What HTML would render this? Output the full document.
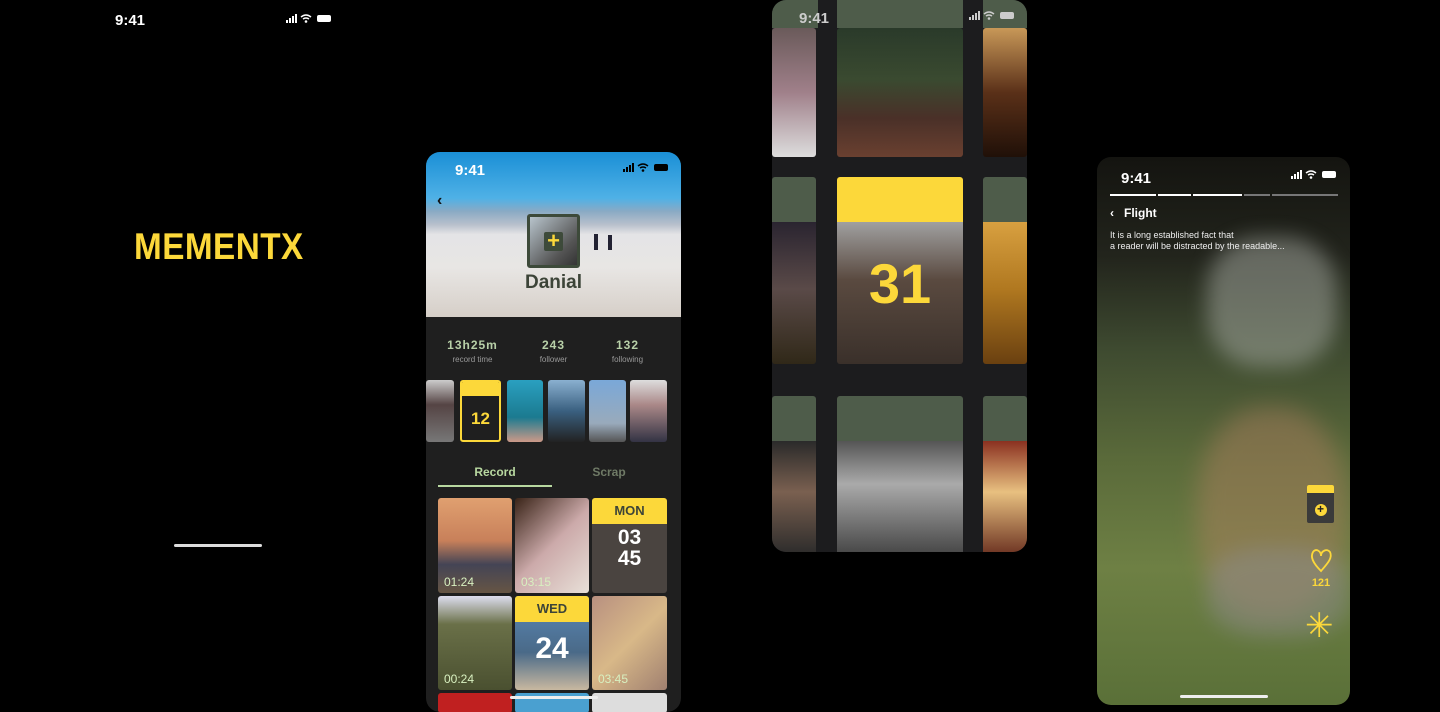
<!DOCTYPE html>
<html><head><style>
*{margin:0;padding:0;box-sizing:border-box}
body{width:1440px;height:705px;background:#000;position:relative;overflow:hidden;font-family:"Liberation Sans",sans-serif}
.abs{position:absolute}
.sb{font-weight:bold;font-size:15px;color:#fff}
.img{position:absolute;border-radius:3px;overflow:hidden}
</style></head><body>
<!-- screen 1 -->
<div class="abs sb" style="left:115px;top:12px">9:41</div>
<svg class="abs" style="left:286px;top:14px" width="48" height="10"><rect x="0" y="6" width="2" height="3" fill="#fff"/><rect x="3" y="4" width="2" height="5" fill="#fff"/><rect x="6" y="2" width="2" height="7" fill="#fff"/><rect x="9" y="0" width="2" height="9" fill="#fff"/><path d="M15 3 Q20 -1 25 3 M17 5 Q20 3 23 5" stroke="#fff" stroke-width="1.5" fill="none"/><circle cx="20" cy="7.5" r="1.3" fill="#fff"/><rect x="31" y="1" width="14" height="7" rx="2" fill="#fff"/></svg>
<div class="abs" style="left:134px;top:226px;font-size:37px;font-weight:bold;color:#fcd83a;transform:scaleX(0.9);transform-origin:0 0;white-space:nowrap;letter-spacing:0.5px">MEMENTX</div>
<div class="abs" style="left:174px;top:544px;width:88px;height:3px;background:#ddd;border-radius:2px"></div>

<!-- screen 2 -->
<div class="abs" style="left:426px;top:152px;width:255px;height:560px;border-radius:14px;overflow:hidden;background:#1f1f1f">
 <div class="abs" style="left:0;top:0;width:255px;height:165px;background:linear-gradient(180deg,#1a8fd6 0%,#4fb1e6 28%,#8aaac4 36%,#b8c0cc 44%,#e4e4e6 50%,#e8e6e4 70%,#d6cfc8 100%)"></div>
 <div class="abs" style="left:168px;top:82px;width:4px;height:16px;background:#223"></div>
 <div class="abs" style="left:182px;top:83px;width:4px;height:15px;background:#223"></div>
 <div class="abs sb" style="left:29px;top:10px">9:41</div>
 <svg class="abs" style="left:197px;top:11px" width="48" height="10"><rect x="0" y="6" width="2" height="3" fill="#000"/><rect x="3" y="4" width="2" height="5" fill="#000"/><rect x="6" y="2" width="2" height="7" fill="#000"/><rect x="9" y="0" width="2" height="9" fill="#000"/><path d="M15 3 Q20 -1 25 3 M17 5 Q20 3 23 5" stroke="#000" stroke-width="1.5" fill="none"/><circle cx="20" cy="7.5" r="1.3" fill="#000"/><rect x="31" y="1" width="14" height="7" rx="2" fill="#000"/></svg>
 <div class="abs" style="left:11px;top:40px;font-size:16px;color:#111;font-weight:bold">‹</div>
 <div class="abs" style="left:101px;top:62px;width:53px;height:54px;border:3px solid #3d4a3a;border-radius:3px;background:linear-gradient(135deg,#b8c4cc,#555 70%,#333)"></div>
 <div class="abs" style="left:118px;top:80px;width:19px;height:19px;background:#3d4a3a;border-radius:2px;color:#fcd83a;font-size:22px;line-height:18px;text-align:center;font-weight:bold">+</div>
 <div class="abs" style="left:0;top:120px;width:255px;text-align:center;font-size:19px;font-weight:bold;color:#3c4438">Danial</div>
 <div class="abs" style="left:4px;top:186px;width:85px;text-align:center;color:#b8d0a8;font-weight:bold;font-size:12px;letter-spacing:1px">13h25m</div>
 <div class="abs" style="left:4px;top:203px;width:85px;text-align:center;color:#999;font-size:8px">record time</div>
 <div class="abs" style="left:85px;top:186px;width:85px;text-align:center;color:#b8d0a8;font-weight:bold;font-size:12px;letter-spacing:1px">243</div>
 <div class="abs" style="left:85px;top:203px;width:85px;text-align:center;color:#999;font-size:8px">follower</div>
 <div class="abs" style="left:159px;top:186px;width:85px;text-align:center;color:#b8d0a8;font-weight:bold;font-size:12px;letter-spacing:1px">132</div>
 <div class="abs" style="left:159px;top:203px;width:85px;text-align:center;color:#999;font-size:8px">following</div>
 <div class="img" style="left:0;top:228px;width:28px;height:62px;background:linear-gradient(#ccc,#544 40%,#777)"></div>
 <div class="img" style="left:34px;top:228px;width:41px;height:62px;border:2px solid #fcd83a;background:#1f1f1f"><div style="height:14px;background:#fcd83a"></div><div style="text-align:center;color:#fcd83a;font-weight:bold;font-size:17px;margin-top:13px">12</div></div>
 <div class="img" style="left:81px;top:228px;width:36px;height:62px;background:linear-gradient(#2aa0c0,#1b7a90 60%,#c98 100%)"></div>
 <div class="img" style="left:122px;top:228px;width:37px;height:62px;background:linear-gradient(#8ab0d0,#3a6080 50%,#222)"></div>
 <div class="img" style="left:163px;top:228px;width:37px;height:62px;background:linear-gradient(#7aa8d8,#9ab 70%,#555)"></div>
 <div class="img" style="left:204px;top:228px;width:37px;height:62px;background:linear-gradient(#ddd,#a88 40%,#334)"></div>
 <div class="abs" style="left:12px;top:313px;width:114px;text-align:center;color:#b8d8a0;font-weight:bold;font-size:12px">Record</div>
 <div class="abs" style="left:126px;top:313px;width:114px;text-align:center;color:#6f7a66;font-weight:bold;font-size:12px">Scrap</div>
 <div class="abs" style="left:12px;top:333px;width:114px;height:1.5px;background:#b8d8a0"></div>
 <div class="img" style="left:12px;top:346px;width:74px;height:95px;background:linear-gradient(#e0a070,#c8805a 45%,#445 70%,#654)"><span class="abs" style="left:6px;bottom:4px;color:#d8f0c0;font-size:12px">01:24</span></div>
 <div class="img" style="left:89px;top:346px;width:74px;height:95px;background:linear-gradient(135deg,#3a2418,#caa 50%,#e8e0d8)"><span class="abs" style="left:6px;bottom:4px;color:#d8f0c0;font-size:12px">03:15</span></div>
 <div class="img" style="left:166px;top:346px;width:75px;height:95px;background:#4a4440"><div style="height:26px;background:#fcd83a;color:#3c4438;font-weight:bold;text-align:center;font-size:13px;line-height:26px">MON</div><div style="color:#fff;font-weight:bold;font-size:21px;text-align:center;line-height:21px;margin-top:3px">03<br>45</div></div>
 <div class="img" style="left:12px;top:444px;width:74px;height:94px;background:linear-gradient(#dde,#6a7048 30%,#4a5030)"><span class="abs" style="left:6px;bottom:4px;color:#d8f0c0;font-size:12px">00:24</span></div>
 <div class="img" style="left:89px;top:444px;width:74px;height:94px;background:linear-gradient(#5a88b8,#4a6a88 60%,#c8b8a0)"><div style="height:26px;background:#fcd83a;color:#3c4438;font-weight:bold;text-align:center;font-size:13px;line-height:26px">WED</div><div style="color:#fff;font-weight:bold;font-size:30px;text-align:center;margin-top:10px">24</div></div>
 <div class="img" style="left:166px;top:444px;width:75px;height:94px;background:linear-gradient(135deg,#b89080,#d8b888 50%,#a08070)"><span class="abs" style="left:6px;bottom:4px;color:#d8f0c0;font-size:12px">03:45</span></div>
 <div class="img" style="left:12px;top:541px;width:74px;height:20px;background:#c02020"></div>
 <div class="img" style="left:89px;top:541px;width:74px;height:20px;background:#4aa0d0"></div>
 <div class="img" style="left:166px;top:541px;width:75px;height:20px;background:#ddd"></div>
 <div class="abs" style="left:84px;top:544px;width:88px;height:3px;background:#eee;border-radius:2px"></div>
</div>

<!-- screen 3 -->
<div class="abs" style="left:772px;top:0;width:255px;height:552px;border-radius:14px;overflow:hidden;background:#1c1c1e">
 <div class="abs" style="left:0;top:0;width:46px;height:28px;background:#4e5c4a"></div>
 <div class="abs" style="left:65px;top:0;width:126px;height:28px;background:#4e5c4a"></div>
 <div class="abs" style="left:211px;top:0;width:44px;height:28px;background:#4e5c4a"></div>
 <div class="img" style="left:0;top:28px;width:44px;height:129px;background:linear-gradient(#6a5a5a,#a0808a 50%,#ddd)"></div>
 <div class="img" style="left:65px;top:28px;width:126px;height:129px;background:linear-gradient(#2a3a2a,#3a4a30 40%,#4a3028 70%,#6a4030)"></div>
 <div class="img" style="left:211px;top:28px;width:44px;height:129px;background:linear-gradient(#c89858,#5a3018 50%,#201008)"></div>
 <div class="abs sb" style="left:27px;top:10px;color:#ccc">9:41</div>
 <svg class="abs" style="left:197px;top:11px" width="48" height="10"><rect x="0" y="6" width="2" height="3" fill="#ccc"/><rect x="3" y="4" width="2" height="5" fill="#ccc"/><rect x="6" y="2" width="2" height="7" fill="#ccc"/><rect x="9" y="0" width="2" height="9" fill="#ccc"/><path d="M15 3 Q20 -1 25 3 M17 5 Q20 3 23 5" stroke="#ccc" stroke-width="1.5" fill="none"/><circle cx="20" cy="7.5" r="1.3" fill="#ccc"/><rect x="31" y="1" width="14" height="7" rx="2" fill="#ccc"/></svg>
 <div class="img" style="left:0;top:177px;width:44px;height:187px;background:linear-gradient(#4e5c4a 0 24%,#2a2430 24%,#5a4a48 60%,#302818)"></div>
 <div class="img" style="left:65px;top:177px;width:126px;height:187px;background:linear-gradient(#fcd83a 0 24%,#a0a0a0 24%,#5a4a40 55%,#3a302a)"><div class="abs" style="left:0;top:74px;width:126px;text-align:center;color:#fcd83a;font-weight:bold;font-size:56px">31</div></div>
 <div class="img" style="left:211px;top:177px;width:44px;height:187px;background:linear-gradient(#4e5c4a 0 24%,#d8a040 24%,#b07820 60%,#6a4010)"></div>
 <div class="img" style="left:0;top:396px;width:44px;height:160px;background:linear-gradient(#4e5c4a 0 28%,#2a2a2a 28%,#7a6050 60%,#2a2a2a)"></div>
 <div class="img" style="left:65px;top:396px;width:126px;height:160px;background:linear-gradient(#4e5c4a 0 28%,#555 28%,#aaa 55%,#444)"></div>
 <div class="img" style="left:211px;top:396px;width:44px;height:160px;background:linear-gradient(#4e5c4a 0 28%,#8a3020 28%,#e8c080 60%,#6a3020)"></div>
</div>

<!-- screen 4 -->
<div class="abs" style="left:1097px;top:157px;width:253px;height:548px;border-radius:14px;overflow:hidden;background:linear-gradient(180deg,#141410 0%,#22241c 18%,#3e4a30 35%,#5a6a3a 55%,#6e8044 75%,#5a7038 100%)">
 <div class="abs" style="left:110px;top:80px;width:130px;height:130px;border-radius:40%;background:#a8aca4;opacity:.5;filter:blur(10px)"></div>
 <div class="abs" style="left:100px;top:250px;width:150px;height:210px;border-radius:45%;background:#b08060;opacity:.45;filter:blur(12px)"></div>
 <div class="abs" style="left:110px;top:390px;width:143px;height:90px;border-radius:40%;background:#8a8a8a;opacity:.5;filter:blur(10px)"></div>
 <div class="abs sb" style="left:24px;top:13px">9:41</div>
 <svg class="abs" style="left:194px;top:13px" width="48" height="10"><rect x="0" y="6" width="2" height="3" fill="#fff"/><rect x="3" y="4" width="2" height="5" fill="#fff"/><rect x="6" y="2" width="2" height="7" fill="#fff"/><rect x="9" y="0" width="2" height="9" fill="#fff"/><path d="M15 3 Q20 -1 25 3 M17 5 Q20 3 23 5" stroke="#fff" stroke-width="1.5" fill="none"/><circle cx="20" cy="7.5" r="1.3" fill="#fff"/><rect x="31" y="1" width="14" height="7" rx="2" fill="#fff"/></svg>
 <div class="abs" style="left:13px;top:37px;width:46px;height:2px;background:#fff"></div>
 <div class="abs" style="left:61px;top:37px;width:33px;height:2px;background:#fff"></div>
 <div class="abs" style="left:96px;top:37px;width:49px;height:2px;background:#fff"></div>
 <div class="abs" style="left:147px;top:37px;width:26px;height:2px;background:#777"></div>
 <div class="abs" style="left:175px;top:37px;width:66px;height:2px;background:#777"></div>
 <div class="abs" style="left:13px;top:49px;color:#fff;font-weight:bold;font-size:12px">‹&nbsp;&nbsp; Flight</div>
 <div class="abs" style="left:13px;top:73px;color:#eee;font-size:9px;line-height:11px">It is a long established fact that<br>a reader will be distracted by the readable...</div>
 <div class="abs" style="left:210px;top:328px;width:27px;height:38px;background:#3a3a3a;border-radius:2px;overflow:hidden"><div style="height:8px;background:#fcd83a"></div><div style="margin:11px auto 0;width:12px;height:12px;border-radius:50%;background:#fcd83a;color:#222;font-size:12px;line-height:11px;text-align:center;font-weight:bold">+</div></div>
 <svg class="abs" style="left:212px;top:390px" width="24" height="26"><path d="M12 24 C4 16 1 10 4 5 C7 1 12 4 12 9 C12 4 18 1 21 5 C24 11 18 17 12 24 Z" stroke="#fcd83a" stroke-width="1.8" fill="none"/></svg>
 <div class="abs" style="left:206px;top:420px;width:36px;text-align:center;color:#fcd83a;font-weight:bold;font-size:11px">121</div>
 <div class="abs" style="left:208px;top:452px;color:#fcd83a;font-size:34px;line-height:34px">✳</div>
 <div class="abs" style="left:83px;top:538px;width:88px;height:3px;background:#eee;border-radius:2px"></div>
</div>
</body></html>
